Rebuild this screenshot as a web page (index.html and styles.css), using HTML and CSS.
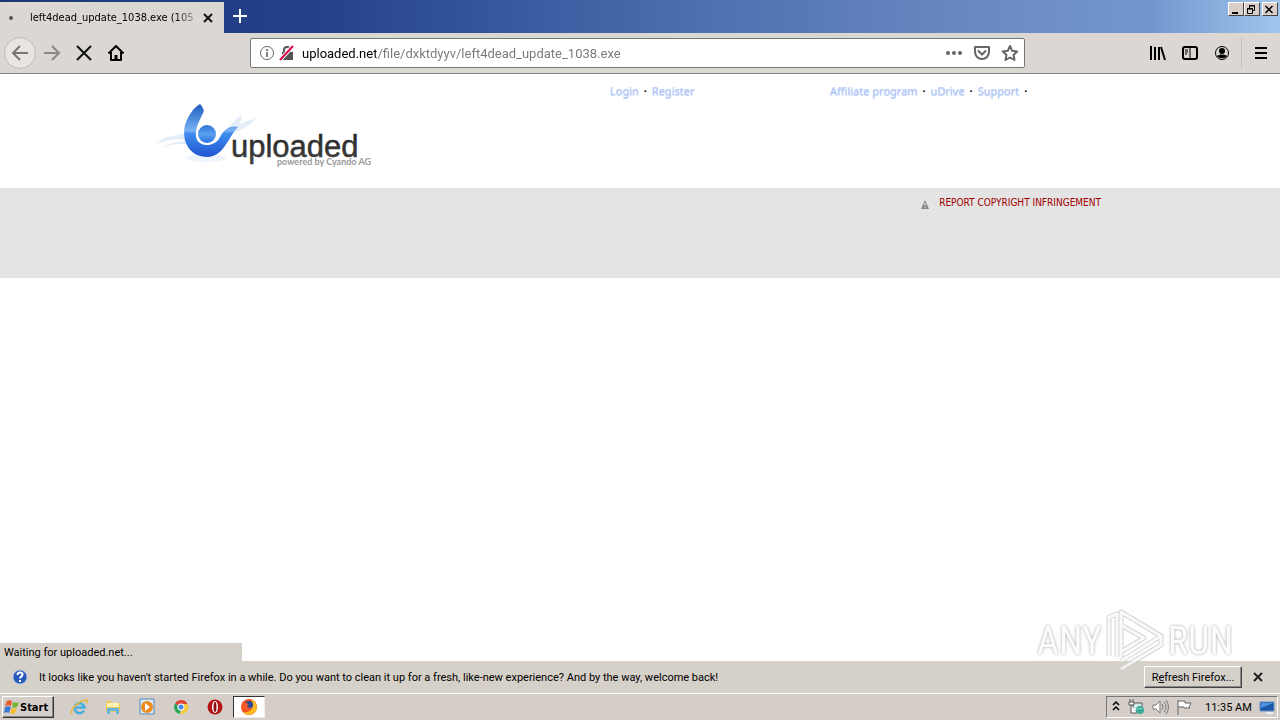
FILE: index.html
```html
<!DOCTYPE html>
<html lang="en">
  <head>
    <meta charset="utf-8">
    <title>left4dead_update_1038.exe</title>
    <link rel="stylesheet" href="styles.css">
  </head>

  <body>
    <header class="titlebar">
      <div class="tab">
        <span class="tab-dot"></span>
        <span class="tab-title">left4dead_update_1038.exe (105</span>
        <button class="icon-button tab-close" aria-label="Close tab">
          <svg width="12" height="12" viewBox="0 0 12 12"><path d="M2 2l8 8M10 2l-8 8" stroke="#111" stroke-width="2"/></svg>
        </button>
      </div>
      <button class="icon-button new-tab" aria-label="New tab">
        <svg width="16" height="16" viewBox="0 0 16 16"><path d="M8 1v14M1 8h14" stroke="#fff" stroke-width="2"/></svg>
      </button>
      <div class="window-buttons">
        <button class="window-button" aria-label="Minimize">
          <svg width="12" height="11" viewBox="0 0 12 11"><path d="M3 9h6" stroke="#000" stroke-width="2"/></svg>
        </button>
        <button class="window-button" aria-label="Restore">
          <svg width="12" height="11" viewBox="0 0 12 11"><path d="M4.500 4V1.500h5v5H8M4 2h6M2.500 4.500h5v5h-5zM2 5h6" fill="none" stroke="#000"/></svg>
        </button>
        <button class="window-button window-close" aria-label="Close">
          <svg width="12" height="11" viewBox="0 0 12 11"><path d="M2.500 2l7 7M9.500 2l-7 7" stroke="#000" stroke-width="1.500"/></svg>
        </button>
      </div>
    </header>

    <nav class="toolbar">
      <button class="icon-button back" aria-label="Back">
        <svg width="18" height="18" viewBox="0 0 18 18"><path d="M17 9H2M9 2L2 9l7 7" fill="none" stroke="#777" stroke-width="2"/></svg>
      </button>
      <button class="icon-button" aria-label="Forward">
        <svg width="18" height="18" viewBox="0 0 18 18"><path d="M1 9h15M9 2l7 7-7 7" fill="none" stroke="#888" stroke-width="2"/></svg>
      </button>
      <button class="icon-button" aria-label="Stop">
        <svg width="18" height="18" viewBox="0 0 18 18"><path d="M2 2l14 14M16 2L2 16" stroke="#111" stroke-width="2"/></svg>
      </button>
      <button class="icon-button" aria-label="Home">
        <svg width="18" height="18" viewBox="0 0 18 18"><path d="M1.500 9.500L9 2l7.500 7.500M4 8v8h10V8" fill="none" stroke="#000" stroke-width="2" stroke-linejoin="round"/><path d="M7.500 16v-5h3v5z"/></svg>
      </button>
      <div class="url-bar">
        <svg width="16" height="16" viewBox="0 0 16 16"><circle cx="8" cy="8" r="6.500" fill="none" stroke="#666"/><path d="M8 7v5M8 4v2" stroke="#555" stroke-width="1.500"/></svg>
        <svg class="lock" width="16" height="16" viewBox="0 0 16 16"><path d="M3 7h11v8H3z" fill="#555"/><path d="M5 8V5a3 3 0 0 1 6 0v3" fill="none" stroke="#555" stroke-width="2"/><path d="M1 15L14 1" stroke="#fff" stroke-width="4"/><path d="M1 15L14 1" stroke="#d70b45" stroke-width="2"/></svg>
        <input class="url-input" type="text" aria-label="Address" value="uploaded.net/file/dxktdyyv/left4dead_update_1038.exe">
        <button class="icon-button small" aria-label="Page actions">
          <svg width="18" height="18" viewBox="0 0 18 18" fill="#666"><circle cx="3" cy="9" r="2"/><circle cx="9" cy="9" r="2"/><circle cx="15" cy="9" r="2"/></svg>
        </button>
        <button class="icon-button small" aria-label="Save to Pocket">
          <svg width="18" height="18" viewBox="0 0 18 18" fill="none" stroke="#666" stroke-width="2"><path d="M2 3h14v5a7 7 0 0 1-14 0z" stroke-linejoin="round"/><path d="M5.500 7L9 10.500 12.500 7" stroke-linecap="round"/></svg>
        </button>
        <button class="icon-button small" aria-label="Bookmark">
          <svg width="18" height="18" viewBox="0 0 18 18"><path d="M9 2l2.200 4.800 5 .6-3.700 3.500 1 5.100L9 13.500 4.500 16l1-5.100L1.800 7.400l5-.6z" fill="none" stroke="#666" stroke-width="2" stroke-linejoin="round"/></svg>
        </button>
      </div>
      <div class="toolbar-right">
        <button class="icon-button" aria-label="Library">
          <svg width="18" height="18" viewBox="0 0 18 18"><path d="M2 2v14M6 3v13M10 3v13M12 3l4 13" stroke="#000" stroke-width="2"/></svg>
        </button>
        <button class="icon-button" aria-label="Sidebars">
          <svg width="18" height="18" viewBox="0 0 18 18"><rect x="2" y="3" width="14" height="12" rx="2" fill="none" stroke="#000" stroke-width="2"/><path d="M9 3v12M4 6h3M4 8h3M4 10h2" stroke="#000"/></svg>
        </button>
        <button class="icon-button" aria-label="Account">
          <svg width="18" height="18" viewBox="0 0 18 18"><circle cx="9" cy="9" r="6.500" fill="none" stroke="#000"/><circle cx="9" cy="7" r="3"/><path d="M4 12c2-2 8-2 10 0-2 3-8 3-10 0z"/></svg>
        </button>
        <span class="toolbar-line"></span>
        <button class="icon-button" aria-label="Menu">
          <svg width="18" height="18" viewBox="0 0 18 18"><path d="M3 4h12M3 9h12M3 14h12" stroke="#000" stroke-width="2"/></svg>
        </button>
      </div>
    </nav>

    <main class="page">
      <div class="page-head">
        <div class="wrap head-row">
          <a class="logo" href="#" aria-label="uploaded">
            <svg width="224" height="84" viewBox="0 0 224 84">
              <defs>
                <linearGradient id="blue" x1="0" y1="0" x2="0" y2="1">
                  <stop offset="0" stop-color="#1c5cc0"/><stop offset=".5" stop-color="#78b2f3"/><stop offset=".56" stop-color="#3f8cee"/><stop offset="1" stop-color="#1f55cf"/>
                </linearGradient>
                <linearGradient id="ball" x1="0" y1="0" x2="0" y2="1">
                  <stop offset="0" stop-color="#2d72d5"/><stop offset=".5" stop-color="#5ba1f0"/><stop offset="1" stop-color="#2874e5"/>
                </linearGradient>
                <linearGradient id="dark" x1="0" y1="0" x2="0" y2="1">
                  <stop offset="0" stop-color="#202020"/><stop offset="1" stop-color="#444"/>
                </linearGradient>
              </defs>
              <path d="M4 47C15 37 25 38 36 35v7C22 40 15 43 4 47z" fill="#e4eef9"/>
              <path d="M10 51c10-8 18-6 28-9v4c-12 0-18 0-28 5zM78 34c10-8 16-10 28-14-7 8-14 12-25 16zM78 29c6-4 8-10 14-12 0 8-4 14-12 19z" fill="#e4eef9"/>
              <ellipse cx="56" cy="60" rx="20" ry="4" fill="#eef4fc"/>
              <path d="M50 6C43 10 38 18 35 27c-4 18 6 32 22 32 17 0 21-20 31-30-9-2-14 3-18 10-4 9-18 11-23 3-4-9 3-20 7-29-1-3-2-5-4-7z" fill="url(#blue)"/>
              <circle cx="57" cy="36" r="9" fill="url(#ball)"/>
              <text class="logo-name" x="81" y="59" fill="url(#dark)" stroke="#333" stroke-width=".5">uploaded</text>
              <text class="logo-note" x="127" y="67">powered by Cyando AG</text>
            </svg>
          </a>
          <div class="links account-links">
            <a href="#">Login</a><b>·</b><a href="#">Register</a>
          </div>
          <div class="links">
            <a href="#">Affiliate program</a><b>·</b><a href="#">uDrive</a><b>·</b><a href="#">Support</a><b>·</b>
          </div>
        </div>
      </div>
      <div class="page-band">
        <div class="wrap report">
          <svg width="10" height="12" viewBox="0 0 10 12"><path d="M5 3l4 9H1z" fill="#888"/><path d="M5 6v3M5 10v1" stroke="#eee"/></svg>
          <a href="#">REPORT COPYRIGHT INFRINGEMENT</a>
        </div>
      </div>
      <div class="status">Waiting for uploaded.net...</div>
    </main>

    <div class="notice">
      <svg width="16" height="16" viewBox="0 0 16 16"><circle cx="8" cy="8" r="7" fill="#2858b8" stroke="#a7bce4"/><path d="M5.500 6c0-3.500 5-3 5-.5C10.500 7.500 8 7.200 8 9.500M8 11v2" fill="none" stroke="#fff" stroke-width="2"/></svg>
      <span class="notice-text">It looks like you haven't started Firefox in a while. Do you want to clean it up for a fresh, like-new experience? And by the way, welcome back!</span>
      <button class="refresh">R<u>e</u>fresh Firefox...</button>
      <button class="icon-button" aria-label="Dismiss">
        <svg width="12" height="12" viewBox="0 0 12 12"><path d="M2 2l8 8M10 2l-8 8" stroke="#222" stroke-width="2"/></svg>
      </button>
    </div>

    <footer class="taskbar">
      <button class="start">
        <svg width="16" height="16" viewBox="0 0 16 16"><path d="M3 2c2-1 3-1 5 0L7 7C5 6 4 6 1 7z" fill="#e8582c"/><path d="M9 3c2 1 4 1 6 0l-2 5c-2 1-3 1-5 0z" fill="#77b52f"/><path d="M1 8c2-1 4-1 6 0l-2 6c-2-1-3-1-5 0z" fill="#3a79d2"/><path d="M8 9c2 1 3 1 5 0l-2 5c-2 1-3 1-5 0z" fill="#f4bd28"/></svg>
        Start
      </button>
      <div class="tasks">
        <button class="task" aria-label="Internet Explorer">
          <svg width="18" height="18" viewBox="0 0 18 18" fill="none"><path d="M14 12.500A5 5 0 1 1 14.500 9.500H5" stroke="#45aee2" stroke-width="2.500"/><path d="M2 16C-1 12 11 1 17 2c1 1 0 2-1 3" stroke="#e6b73c" stroke-width="1.500"/></svg>
        </button>
        <button class="task" aria-label="Explorer">
          <svg width="18" height="18" viewBox="0 0 18 18"><path d="M2 3h5l1 2h8v9H2z" fill="#e9c862"/><path d="M3 5h12v4H3z" fill="#fff2af"/><path d="M3 16v-6h12v6h-3v-3H6v3z" fill="#64b5dc"/></svg>
        </button>
        <button class="task" aria-label="Media Player">
          <svg width="18" height="18" viewBox="0 0 18 18"><path d="M2 1h14v15H2z" fill="#d8eafa" stroke="#568abc"/><circle cx="9" cy="9" r="6" fill="#f08a18"/><path d="M7 5l5 4-5 4z" fill="#fff"/></svg>
        </button>
        <button class="task" aria-label="Chrome">
          <svg width="18" height="18" viewBox="0 0 18 18"><path d="M9 9L3 5.500A7 7 0 0 1 15.500 6H9z" fill="#df4439"/><path d="M9 9l-1 7A7 7 0 0 1 3 5.500z" fill="#2ca55a"/><path d="M9 6h6.500A7 7 0 0 1 8 16l3.500-6z" fill="#f6c936"/><circle cx="9" cy="9" r="3.500" fill="#fff"/><circle cx="9" cy="9" r="2.500" fill="#4a86e4"/></svg>
        </button>
        <button class="task" aria-label="Opera">
          <svg width="18" height="18" viewBox="0 0 18 18"><circle cx="9" cy="9" r="7.500" fill="#b51216"/><ellipse cx="9" cy="9" rx="3" ry="6" fill="#fff"/><ellipse cx="9" cy="9" rx="1.500" ry="5" fill="#871012"/></svg>
        </button>
        <button class="task active" aria-label="Firefox">
          <svg width="18" height="18" viewBox="0 0 18 18"><circle cx="9" cy="9" r="8" fill="#f4511f"/><path d="M11 1c7 3 8 12 1 15-3 2-7 0-9-2 8 2 12-6 8-13z" fill="#ffbd24"/><circle cx="9" cy="7" r="4" fill="#294b9b"/><path d="M3 4l3 1 3 1-2 2 2 2 3-1-3 4c-6 1-8-5-6-9z" fill="#f4592a"/></svg>
        </button>
      </div>
      <div class="tray">
        <svg width="10" height="16" viewBox="0 0 10 16"><path d="M2 6l3-3 3 3M2 11l3-3 3 3" fill="none" stroke="#000" stroke-width="1.500"/></svg>
        <svg width="18" height="18" viewBox="0 0 18 18"><path d="M6 5h9v8H6z" fill="#d4f0ed" stroke="#555"/><path d="M3 1v3M6 1v3M2 4h5v3H2zM4 7v8h6" fill="#fff" stroke="#555"/><circle cx="13" cy="12" r="4" fill="#38a995"/><path d="M10 12c2-3 4 0 6-2" fill="none" stroke="#a9e0d2"/></svg>
        <svg width="18" height="18" viewBox="0 0 18 18" fill="none" stroke="#777"><path d="M2 7h3l4-4v12l-4-4H2z" fill="#fff"/><path d="M11 6q2 3 0 6M13 4q4 5 0 10M15 2q5 7 0 14"/></svg>
        <svg width="18" height="18" viewBox="0 0 18 18"><path d="M3 2v15M3 3h7v2h6l-2 4 1 1H9V9H3" fill="#fff" stroke="#666"/></svg>
        <time class="clock">11:35 AM</time>
        <svg width="18" height="16" viewBox="0 0 18 16"><path d="M2 3h14v9H2z" fill="#1957a8" stroke="#6892c5"/><path d="M3 4h12L3 9z" fill="#4d93dd"/><path d="M8 14h7" stroke="#e6edf5" stroke-width="2"/></svg>
      </div>
    </footer>

    <div class="watermark">
      <span>ANY</span>
      <svg width="60" height="66" viewBox="0 0 60 66" fill="none" stroke-linejoin="round"><path d="M4 48V9l8-3v43M16 49V4l40 24-40 25M16 17l23 13-23 14M16 61l40-24v-9" stroke="#ccc" stroke-width="5"/><path d="M4 48V9l8-3v43M16 49V4l40 24-40 25M16 17l23 13-23 14M16 61l40-24v-9" stroke="#f8f8f8" stroke-width="3"/></svg>
      <span>RUN</span>
    </div>
  </body>
</html>
```
FILE: styles.css
```css
* {
  box-sizing: border-box;
}

body {
  margin: 0;
  height: 100vh;
  display: flex;
  flex-direction: column;
  overflow: hidden;
  background: #fff;
  color: #000;
  font-family: Roboto, sans-serif;
  font-size: 11px;
}

button {
  font: inherit;
  color: inherit;
  padding: 0;
}

svg {
  display: block;
  flex: none;
}

.icon-button {
  display: flex;
  align-items: center;
  justify-content: center;
  width: 32px;
  height: 32px;
  flex: none;
  border: none;
  background: none;
}

.icon-button.small {
  width: 28px;
}

/* tabs */
.titlebar {
  display: flex;
  align-items: flex-start;
  height: 33px;
  flex: none;
  padding-top: 2px;
  background: linear-gradient(to right, #1c3877, #24428a 25%, #4d70b1 55%, #6888c0 75%, #7397cd 90%, #a0c5ed);
}

.tab {
  display: flex;
  align-items: center;
  width: 224px;
  height: 31px;
  background: #dbd7d2;
}

.tab-dot {
  flex: none;
  width: 4px;
  height: 4px;
  margin: 0 17px 0 9px;
  border-radius: 50%;
  background: #555;
}

.tab-title {
  flex: 1;
  font-family: "DejaVu Sans Condensed", sans-serif;
  white-space: nowrap;
  -webkit-mask-image: linear-gradient(to right, #000 88%, transparent 105%);
  mask-image: linear-gradient(to right, #000 88%, transparent 105%);
}

.tab-close {
  width: 28px;
  height: 28px;
  margin-right: 3px;
}

.new-tab {
  height: 28px;
}

.window-buttons {
  display: flex;
  margin-left: auto;
  padding-right: 2px;
}

.window-button {
  width: 16px;
  height: 14px;
  background: #d8d0c8;
  border: 1px solid;
  border-color: #fff #444 #444 #fff;
}

.window-close {
  margin-left: 2px;
}

/* address row */
.toolbar {
  display: flex;
  align-items: center;
  height: 41px;
  flex: none;
  padding: 0 3px 0 4px;
  background: #dbd7d2;
  border-bottom: 1px solid #86847f;
}

.back {
  border: 1px solid #c0bcb7;
  border-radius: 50%;
  background: #e9e6e2;
}

.url-bar {
  display: flex;
  align-items: center;
  flex: 0 1 775px;
  height: 30px;
  margin-left: 118px;
  padding-left: 8px;
  border: 1px solid #777;
  border-radius: 2px;
  background: #fff;
}

.lock {
  margin-left: 4px;
}

.url-input {
  flex: 1;
  min-width: 0;
  margin-left: 7px;
  padding: 0;
  border: none;
  outline: none;
  font-family: Roboto, sans-serif;
  font-size: 13px;
  /* host is black, the path is grey */
  background: linear-gradient(to right, #000 74px, #777 74px);
  -webkit-background-clip: text;
  background-clip: text;
  color: transparent;
}

.toolbar-right {
  display: flex;
  align-items: center;
  margin-left: auto;
}

.toolbar-line {
  width: 1px;
  height: 32px;
  margin: 0 3px;
  background: #c3bfba;
}

/* page */
.page {
  position: relative;
  flex: 1;
  min-height: 0;
}

.wrap {
  max-width: 980px;
  margin: 0 auto;
}

.page-head {
  height: 114px;
}

.head-row {
  display: flex;
}

.logo {
  width: 460px;
  padding-top: 24px;
}

.logo-name {
  font-family: "Liberation Sans", sans-serif;
  font-size: 31px;
}

.logo-note {
  font-family: Lato, sans-serif;
  font-size: 9px;
  font-weight: bold;
  fill: #999;
}

.links {
  padding-top: 9px;
  font-family: "Noto Sans", sans-serif;
  line-height: 15px;
}

.links a {
  color: #b4c8f6;
  text-decoration: none;
  text-shadow: 0 1px 1px #b5caf6;
}

.links b {
  display: inline-block;
  width: 13px;
  text-align: center;
}

.account-links {
  width: 220px;
}

.page-band {
  height: 90px;
  background: #e4e4e4;
}

.report {
  display: flex;
  justify-content: flex-end;
  align-items: center;
  gap: 9px;
  padding: 7px 29px 0 0;
}

.report a {
  font-family: "DejaVu Sans Condensed", sans-serif;
  font-size: 10px;
  line-height: 15px;
  color: #a00000;
  text-decoration: none;
}

.status {
  position: absolute;
  left: 0;
  bottom: 0;
  width: 242px;
  height: 18px;
  padding-left: 4px;
  line-height: 19px;
  background: #d5d0c8;
}

/* notification */
.notice {
  display: flex;
  align-items: center;
  height: 32px;
  flex: none;
  padding: 0 6px 0 12px;
  background: #d5d0c8;
}

.notice-text {
  flex: 1;
  margin-left: 11px;
  white-space: nowrap;
}

.refresh {
  width: 98px;
  height: 22px;
  border: 1px solid;
  border-color: #fff #444 #444 #fff;
  box-shadow: inset -1px -1px #888;
  background: #d5d0c8;
}

/* taskbar */
.taskbar {
  display: flex;
  align-items: center;
  height: 27px;
  flex: none;
  padding: 0 2px;
  background: #d5cec8;
  border-top: 1px solid #fff;
}

.start {
  display: flex;
  align-items: center;
  width: 52px;
  height: 22px;
  padding-left: 1px;
  font-family: "DejaVu Sans Condensed", sans-serif;
  font-weight: bold;
  border: 1px solid;
  border-color: #fff #333 #333 #fff;
  box-shadow: inset -1px -1px #888;
  background: #d5cec8;
}

.tasks {
  display: flex;
  gap: 2px;
  margin-left: 9px;
}

.task {
  display: flex;
  align-items: center;
  justify-content: center;
  width: 32px;
  height: 22px;
  border: none;
  background: none;
}

.task.active {
  background: #fff;
  border: 1px solid;
  border-color: #333 #eee #eee #333;
}

.tray {
  display: flex;
  align-items: center;
  gap: 6px;
  height: 22px;
  margin-left: auto;
  padding: 0 1px 0 4px;
  border: 1px solid;
  border-color: #777 #fff #fff #777;
}

.clock {
  width: 47px;
  margin-left: 6px;
  white-space: nowrap;
}

/* watermark lies over the page and the notification */
.watermark {
  position: absolute;
  right: 47px;
  bottom: 46px;
  display: flex;
  align-items: center;
  gap: 3px;
  color: #fcfcfc;
  font-family: "Liberation Sans Narrow", "Roboto Condensed", Roboto, sans-serif;
  font-size: 38px;
  text-shadow: 0 0 3px #888;
  opacity: .8;
  pointer-events: none;
}
```
